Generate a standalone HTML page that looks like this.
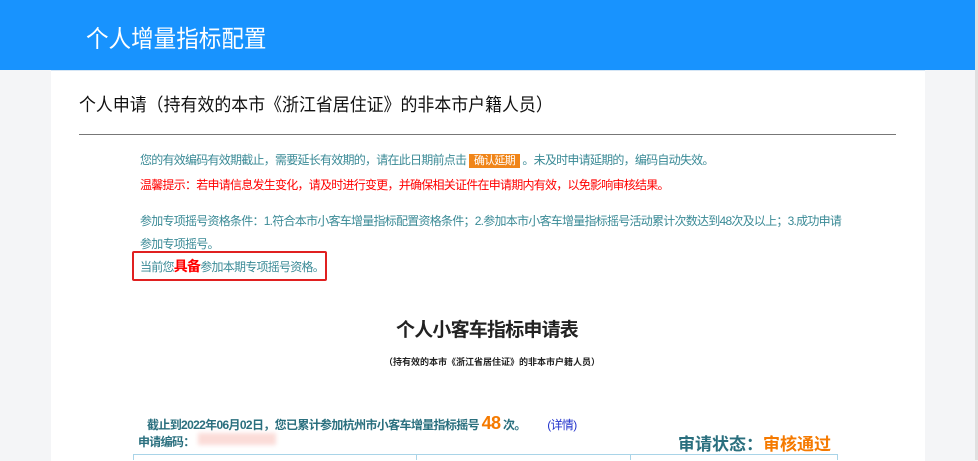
<!DOCTYPE html>
<html><head><meta charset="utf-8"><style>
body{margin:0;width:978px;height:460px;overflow:hidden;background:#f4f5f7;font-family:"Liberation Sans","Noto Sans CJK SC",sans-serif;position:relative}
.hdr{position:absolute;left:0;top:0;width:975px;height:70px;background:#1893fe}
.hdr span{position:absolute;left:86px;top:19px;color:#fff;font-size:24px;transform:scaleX(0.94);transform-origin:0 0;white-space:nowrap}
.sb{position:absolute;left:975px;top:0;width:3px;height:460px;background:#e0e0e0}
.panel{position:absolute;left:51px;top:70px;width:874px;height:390px;background:#fff;border-top:1px solid #d6e6f5}
.t{position:absolute;white-space:nowrap}
.g{color:#3a8a96;font-size:12px;letter-spacing:-0.75px}
</style></head><body>
<div class="hdr"><span>个人增量指标配置</span></div>
<div class="sb"></div>
<div class="panel"></div>
<div class="t" style="left:79px;top:91px;font-size:18px;color:#111;transform:scaleX(0.94);transform-origin:0 0">个人申请（持有效的本市《浙江省居住证》的非本市户籍人员）</div>
<div style="position:absolute;left:79px;top:134px;width:817px;height:1px;background:#777"></div>
<div class="t g" style="left:140px;top:151px">您的有效编码有效期截止，需要延长有效期的，请在此日期前点击 <span style="background:#f08519;color:#fff;padding:1px 5px;font-size:11px">确认延期</span> 。未及时申请延期的，编码自动失效。</div>
<div class="t" style="left:140px;top:176px;color:#f00;font-size:12px;letter-spacing:-0.75px">温馨提示：若申请信息发生变化，请及时进行变更，并确保相关证件在申请期内有效，以免影响审核结果。</div>
<div class="t g" style="left:140px;top:212px">参加专项摇号资格条件：1.符合本市小客车增量指标配置资格条件；2.参加本市小客车增量指标摇号活动累计次数达到48次及以上；3.成功申请</div>
<div class="t g" style="left:140px;top:235px">参加专项摇号。</div>
<div style="position:absolute;left:132px;top:251px;width:195px;height:30px;border:2px solid #e02020;box-sizing:border-box;border-radius:2px"></div>
<div class="t g" style="left:140px;top:256px">当前您<b style="color:#f00;font-size:14px">具备</b>参加本期专项摇号资格。</div>
<div class="t" style="left:396px;top:315px;font-size:19px;font-weight:bold;color:#222;letter-spacing:-0.8px">个人小客车指标申请表</div>
<div class="t" style="left:384px;top:355px;font-size:9px;font-weight:bold;color:#222">（持有效的本市《浙江省居住证》的非本市户籍人员）</div>
<div class="t" style="left:147px;top:413px;font-size:12px;color:#2a6f7e;font-weight:bold;letter-spacing:-0.65px">截止到2022年06月02日，您已累计参加杭州市小客车增量指标摇号 <span style="color:#f57a00;font-size:18px">48</span> 次。 &nbsp;&nbsp;&nbsp;&nbsp;&nbsp;&nbsp;&nbsp;<span style="color:#2233cc;font-weight:normal">(详情)</span></div>
<div class="t" style="left:138px;top:433px;font-size:12px;color:#2a6f7e;font-weight:bold;letter-spacing:-0.7px">申请编码：</div>
<div style="position:absolute;left:198px;top:433px;width:78px;height:12px;background:#fbdcd8;filter:blur(2px)"></div>
<div class="t" style="left:678px;top:430px;font-size:17px;font-weight:bold;color:#2a6f7e">审请状态：<span style="color:#f57a00">审核通过</span></div>
<div style="position:absolute;left:133px;top:454px;width:705px;height:6px;border:1px solid #a9d4e8;border-bottom:0;box-sizing:border-box"></div>
<div style="position:absolute;left:416px;top:454px;width:1px;height:6px;background:#a9d4e8"></div>
<div style="position:absolute;left:630px;top:454px;width:1px;height:6px;background:#a9d4e8"></div>
</body></html>
